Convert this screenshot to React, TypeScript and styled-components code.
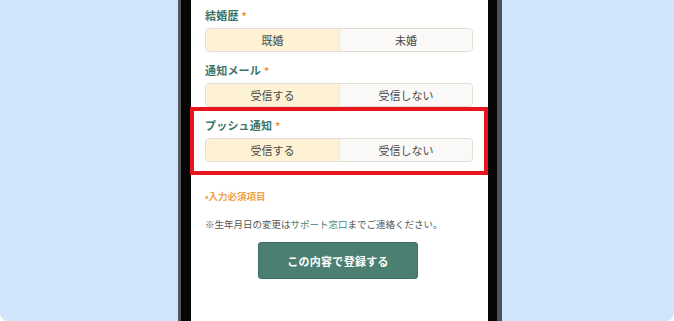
import React from 'react';
import styled, { createGlobalStyle } from 'styled-components';

const GlobalStyle = createGlobalStyle`
  html, body {
    margin: 0;
    padding: 0;
    background: #ffffff;
  }
  body {
    font-family: "Noto Sans CJK JP", "Noto Sans", sans-serif;
  }
`;

const Stage = styled.div`
  position: relative;
  width: 674px;
  height: 321px;
  overflow: hidden;
  background: #d1e5fc;
  border-radius: 0 0 8px 8px;
  padding-left: 178px;
  box-sizing: border-box;
  display: flex;
`;

const PhoneFrame = styled.div`
  width: 324px;
  height: 100%;
  box-sizing: border-box;
  background: #060606;
  border-left: 3px solid #50575d;
  border-right: 5px solid #4a5258;
  padding: 0 9px 0 10px;
  display: flex;
`;

const Screen = styled.div`
  flex: 1;
  background: #ffffff;
  padding: 8px 15px 0 14px;
  display: flex;
  flex-direction: column;
`;

const Field = styled.div`
  display: flex;
  flex-direction: column;
  gap: 5px;
  margin-bottom: 11px;
`;

const Label = styled.div`
  font-size: 11px;
  line-height: 14px;
  font-weight: 700;
  color: #3b7468;
  letter-spacing: 0.2px;
`;

const Required = styled.span`
  color: #f08a2a;
  margin-left: 3px;
  font-size: 10px;
`;

const Segments = styled.div`
  display: grid;
  grid-template-columns: 1fr 1fr;
  height: 24px;
  border: 1px solid #e3ded4;
  border-radius: 4px;
  overflow: hidden;
  box-sizing: border-box;
`;

const Segment = styled.div<{ $active?: boolean }>`
  display: flex;
  align-items: center;
  justify-content: center;
  font-size: 11px;
  color: #4a4a4a;
  background: ${(p) => (p.$active ? '#fdf2d3' : '#faf9f7')};
  & + & {
    border-left: 1px solid #ece7dc;
  }
`;

const RequiredNote = styled.div`
  margin-top: 17px;
  font-size: 9.5px;
  line-height: 13px;
  font-weight: 700;
  color: #f2a24c;
`;

const Notice = styled.div`
  margin-top: 14px;
  font-size: 9.5px;
  line-height: 14px;
  color: #555555;
  white-space: nowrap;
`;

const SupportLink = styled.span`
  color: #3f8677;
`;

const SubmitButton = styled.button`
  align-self: center;
  margin-top: 11px;
  margin-left: -2px;
  width: 160px;
  height: 37px;
  border: 1px solid #3f7165;
  border-radius: 3px;
  background: #4a7f72;
  color: #ffffff;
  font-family: inherit;
  font-size: 11px;
  font-weight: 700;
  letter-spacing: 0.3px;
`;

const Highlight = styled.div`
  position: absolute;
  left: 190px;
  top: 107px;
  width: 298px;
  height: 68px;
  box-sizing: border-box;
  border: 4px solid #e8151d;
  pointer-events: none;
`;

const fields = [
  { label: '結婚歴', options: ['既婚', '未婚'] },
  { label: '通知メール', options: ['受信する', '受信しない'] },
  { label: 'プッシュ通知', options: ['受信する', '受信しない'] },
];

const App: React.FC = () => {
  return (
    <>
      <GlobalStyle />
      <Stage>
        <PhoneFrame>
          <Screen>
            {fields.map((f) => (
              <Field key={f.label}>
                <Label>
                  {f.label}
                  <Required>*</Required>
                </Label>
                <Segments>
                  {f.options.map((o, i) => (
                    <Segment key={o} $active={i === 0}>
                      {o}
                    </Segment>
                  ))}
                </Segments>
              </Field>
            ))}
            <RequiredNote>•入力必須項目</RequiredNote>
            <Notice>
              ※生年月日の変更は<SupportLink>サポート窓口</SupportLink>までご連絡ください。
            </Notice>
            <SubmitButton>この内容で登録する</SubmitButton>
          </Screen>
        </PhoneFrame>
        <Highlight />
      </Stage>
    </>
  );
};

export default App;
